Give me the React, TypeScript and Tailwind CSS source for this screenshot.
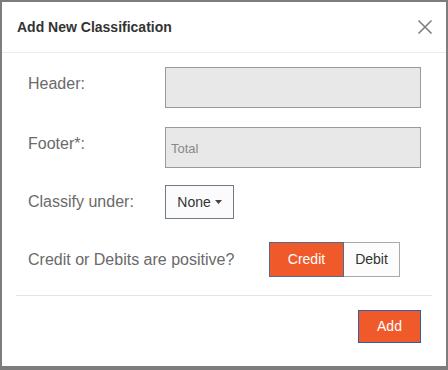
import React from 'react';

export default function App() {
  const [mode, setMode] = React.useState<'credit' | 'debit'>('credit');

  return (
    <div className="w-[448px] h-[370px] bg-white border-t-2 border-l-2 border-r-2 border-b-4 border-[#7d7d7d] flex flex-col font-['Liberation_Sans',Arial,sans-serif]">
      {/* Header */}
      <div className="h-[51px] shrink-0 flex items-center justify-between pl-[15px] pr-[13px] border-b border-[#e8ebef]">
        <h2 className="text-[14px] font-bold text-[#333]">Add New Classification</h2>
        <button className="w-[16px] h-[16px] flex items-center justify-center">
          <svg width="16" height="16" viewBox="0 0 16 16" fill="none" stroke="#7a7a7a" strokeWidth="1.5">
            <path d="M1.5 1.5 L14.5 14.5 M14.5 1.5 L1.5 14.5" />
          </svg>
        </button>
      </div>

      {/* Body */}
      <div className="flex flex-col pl-[26px] pt-[14px]">
        <div className="flex items-start">
          <label className="w-[137px] pt-[5px] text-[16px] text-[#6a6a6a]">Header:</label>
          <input className="w-[256px] h-[41px] bg-[#e8e8e8] border border-[#9a9a9a] outline-none px-[5px] text-[13px]" />
        </div>

        <div className="flex items-start mt-[19px]">
          <label className="w-[137px] pt-[5px] text-[16px] text-[#6a6a6a]">Footer*:</label>
          <input
            placeholder="Total"
            className="w-[256px] h-[41px] bg-[#e8e8e8] border border-[#9a9a9a] outline-none px-[5px] pt-[1px] text-[13px] placeholder:text-[#888]"
          />
        </div>

        <div className="flex items-center mt-[17px]">
          <label className="w-[137px] text-[16px] text-[#6a6a6a]">Classify under:</label>
          <button className="w-[69px] h-[34px] bg-[#fbfbfb] border border-[#707a86] flex items-center justify-center gap-[4px] text-[14px] text-[#333]">
            None
            <svg width="7" height="4" viewBox="0 0 7 4">
              <path d="M0 0 L7 0 L3.5 4 Z" fill="#444" />
            </svg>
          </button>
        </div>

        <div className="flex items-center mt-[23px]">
          <label className="w-[241px] text-[16px] text-[#6a6a6a]">Credit or Debits are positive?</label>
          <div className="flex">
            <button
              onClick={() => setMode('credit')}
              className={
                mode === 'credit'
                  ? 'w-[75px] h-[35px] bg-[#f05a2a] border border-[#4f6b92] text-white text-[14px]'
                  : 'w-[75px] h-[35px] bg-[#fcfcfc] border border-[#a9a9a9] text-[#333] text-[14px]'
              }
            >
              Credit
            </button>
            <button
              onClick={() => setMode('debit')}
              className={
                mode === 'debit'
                  ? 'w-[56px] h-[35px] bg-[#f05a2a] border border-[#4f6b92] border-l-0 text-white text-[14px]'
                  : 'w-[56px] h-[35px] bg-[#fcfcfc] border border-[#a9a9a9] border-l-0 text-[#333] text-[14px]'
              }
            >
              Debit
            </button>
          </div>
        </div>
      </div>

      {/* Footer */}
      <div className="mx-[14px] mt-[18px] border-t border-[#e3e3e3]" />
      <div className="flex justify-end pr-[25px] pt-[14px]">
        <button className="w-[63px] h-[33px] bg-[#f05a2a] border border-[#2e5fa8] text-white text-[14px]">Add</button>
      </div>
    </div>
  );
}
